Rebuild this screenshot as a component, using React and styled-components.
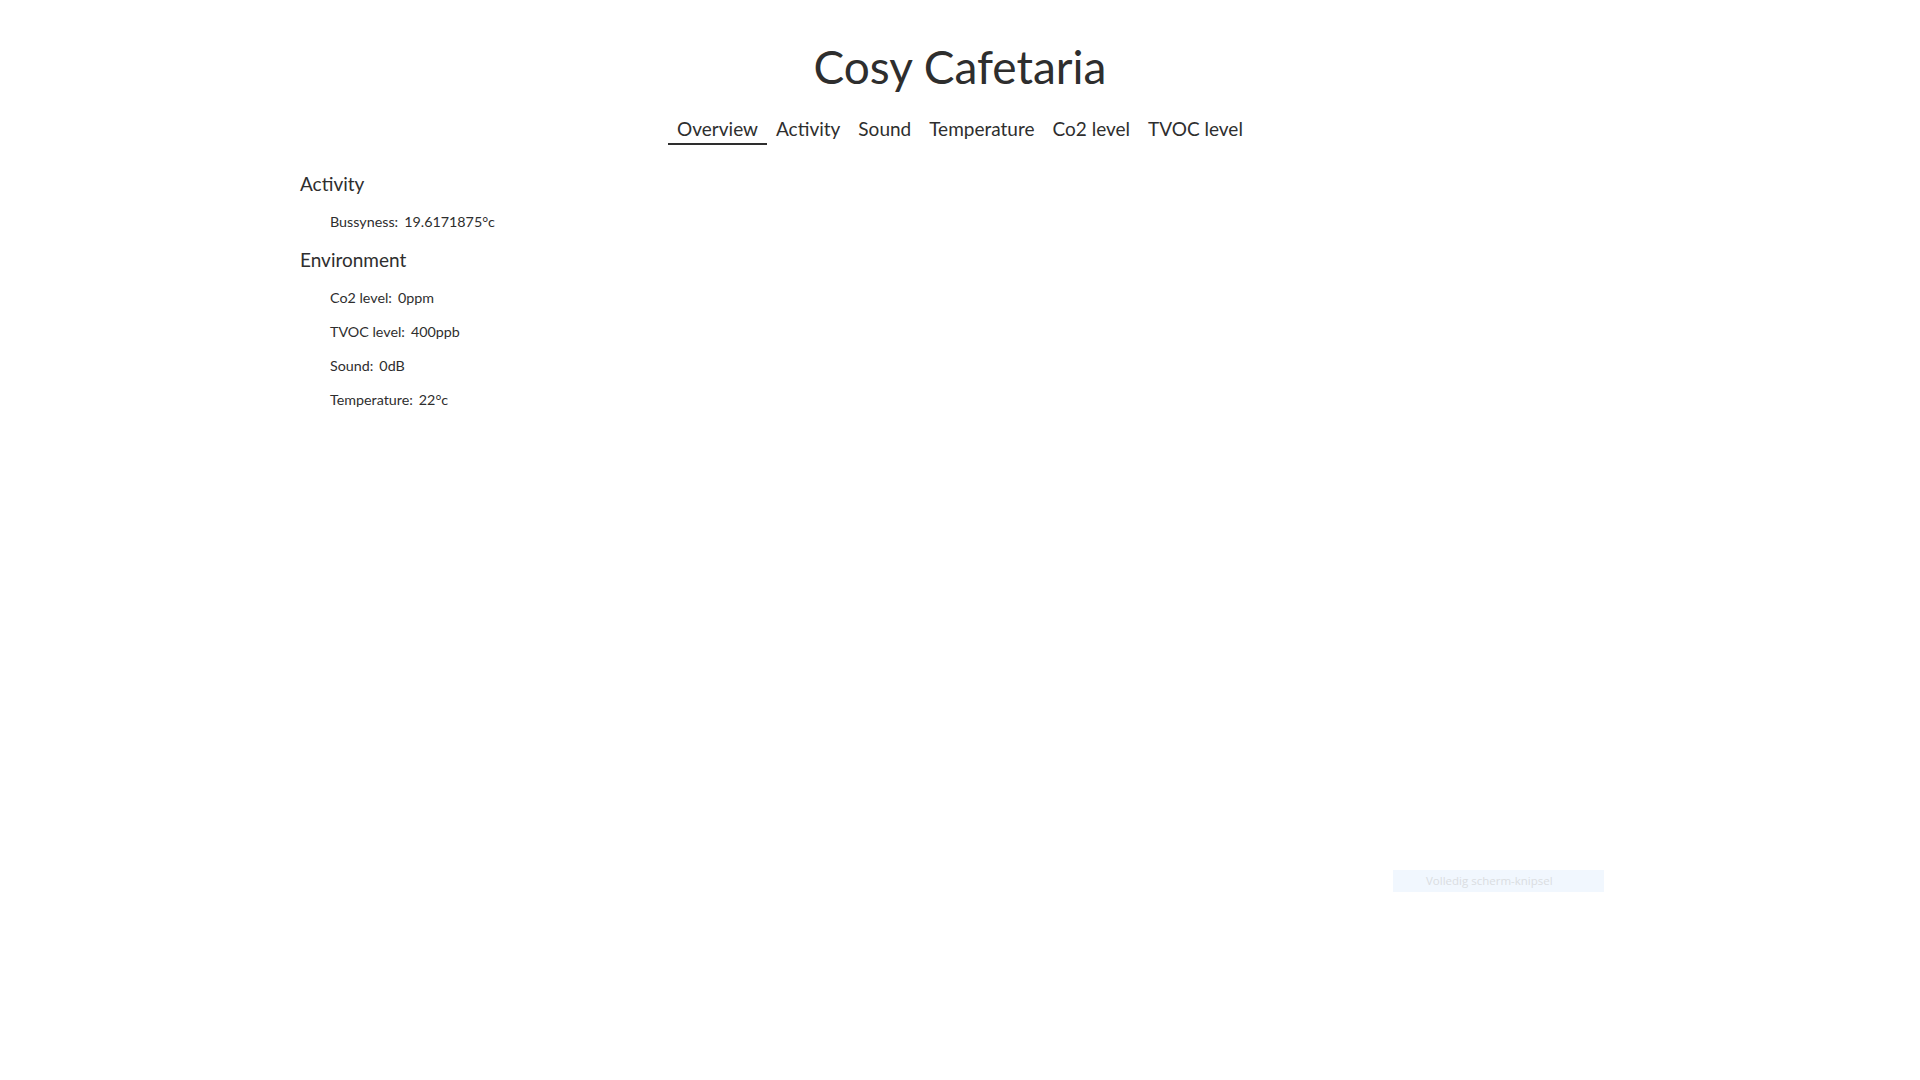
import React from "react";
import styled, { createGlobalStyle } from "styled-components";

const Global = createGlobalStyle`
  html, body { margin: 0; padding: 0; background: #ffffff; }
  body { font-family: Lato, "Open Sans", "Liberation Sans", sans-serif; color: #2e2e2e; }
`;

const Page = styled.div`
  position: relative;
  min-height: 100vh;
  padding-top: 39px;
  box-sizing: border-box;
`;

const Title = styled.h1`
  margin: 0;
  text-align: center;
  font-size: 46px;
  line-height: 56px;
  font-weight: 400;
  color: #2e2e2e;
`;

const Nav = styled.nav`
  display: flex;
  justify-content: center;
  gap: 0;
  margin-top: 22px;
`;

const Tab = styled.a`
  display: block;
  padding: 0 9px 2px;
  font-size: 19px;
  line-height: 24px;
  color: #2e2e2e;
  text-decoration: none;
  border-bottom: 2px solid ${(p) => (p.$active ? "#2e2e2e" : "transparent")};
  cursor: pointer;
`;

const Content = styled.main`
  max-width: 1320px;
  margin: 27px auto 0;
  display: flex;
  flex-direction: column;
  gap: 16px;
`;

const Section = styled.section`
  display: flex;
  flex-direction: column;
  gap: 16px;
`;

const Heading = styled.h2`
  margin: 0;
  font-size: 19px;
  line-height: 24px;
  font-weight: 400;
`;

const List = styled.ul`
  list-style: none;
  margin: 0;
  padding: 0 0 0 30px;
  display: flex;
  flex-direction: column;
  gap: 14px;
`;

const Row = styled.li`
  font-size: 14.3px;
  line-height: 20px;
  display: flex;
  gap: 6px;
`;

const Snip = styled.div`
  position: absolute;
  left: 1393px;
  top: 870px;
  width: 211px;
  height: 22px;
  box-sizing: border-box;
  padding-left: 33px;
  background: #f1f7fe;
  color: #dadde1;
  font-family: "Open Sans", sans-serif;
  font-size: 11.5px;
  line-height: 22px;
`;

const tabs = ["Overview", "Activity", "Sound", "Temperature", "Co2 level", "TVOC level"];

const sections = [
  { title: "Activity", rows: [["Bussyness:", "19.6171875°c"]] },
  {
    title: "Environment",
    rows: [
      ["Co2 level:", "0ppm"],
      ["TVOC level:", "400ppb"],
      ["Sound:", "0dB"],
      ["Temperature:", "22°c"],
    ],
  },
];

export default function App() {
  return (
    <Page>
      <Global />
      <Title>Cosy Cafetaria</Title>
      <Nav>
        {tabs.map((t, i) => (
          <Tab key={t} $active={i === 0}>{t}</Tab>
        ))}
      </Nav>
      <Content>
        {sections.map((s) => (
          <Section key={s.title}>
            <Heading>{s.title}</Heading>
            <List>
              {s.rows.map(([k, v]) => (
                <Row key={k}>
                  <span>{k}</span>
                  <span>{v}</span>
                </Row>
              ))}
            </List>
          </Section>
        ))}
      </Content>
      <Snip>Volledig scherm-knipsel</Snip>
    </Page>
  );
}
